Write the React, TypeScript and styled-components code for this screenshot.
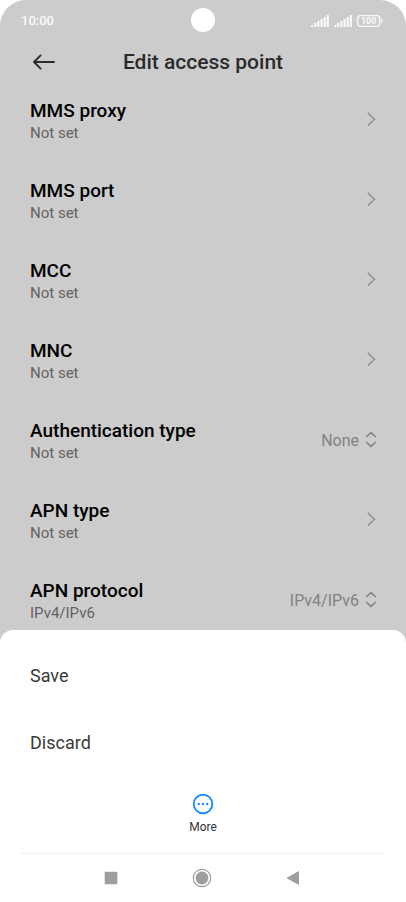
import React, { useState } from "react";
import styled, { createGlobalStyle } from "styled-components";

const GlobalStyle = createGlobalStyle`
  *, *::before, *::after { box-sizing: border-box; }
  html { height: 100%; }
  body {
    margin: 0;
    background: #fff;
    font-family: Roboto, "Noto Sans", sans-serif;
    overflow: hidden;
  }
  button, select { font: inherit; color: inherit; background: none; border: 0; padding: 0; margin: 0; }
  button { cursor: pointer; }
  svg { display: block; flex: none; }
`;

const Screen = styled.div`
  height: 100vh;
  overflow: hidden;
  background: #ccc;
  border-radius: 26px 26px 0 0;
`;

const StatusBar = styled.div`
  height: 40px;
  padding: 0 21px;
  display: grid;
  grid-template-columns: 1fr auto 1fr;
  align-items: center;
  color: #fafafa;
`;

const Clock = styled.time`
  font-size: 13px;
  line-height: 20px;
  padding-top: 2px;
  font-weight: 500;
`;

const Camera = styled.div`
  width: 24px;
  height: 24px;
  border-radius: 50%;
  background: #fff;
`;

const StatusIcons = styled.div`
  display: flex;
  justify-content: flex-end;
  align-items: center;
  gap: 5px;
  padding: 2px 2px 0 0;
`;

const Header = styled.header`
  height: 40px;
  padding: 4px 32px 0;
  display: grid;
  grid-template-columns: 24px 1fr 24px;
  align-items: center;
`;

const Title = styled.h1`
  margin: 0;
  text-align: center;
  font-size: 21px;
  line-height: 28px;
  font-weight: 500;
  color: #2b2b2b;
`;

const List = styled.main`
  display: flex;
  flex-direction: column;
`;

const rowLayout = `
  display: flex;
  align-items: center;
  justify-content: space-between;
  width: 100%;
  height: 80px;
  text-align: left;
`;

const LinkRow = styled.button`
  ${rowLayout}
  &&& { padding: 0 29px 0 30px; }
`;

const ChoiceRow = styled.div`
  ${rowLayout}
  padding: 0 29px 0 30px;
`;

const Texts = styled.span`
  display: flex;
  flex-direction: column;
  padding-top: 2px;
`;

const Name = styled.label`
  font-size: 19px;
  line-height: 24px;
  font-weight: 500;
  color: #000;
  cursor: inherit;
`;

const Detail = styled.span`
  font-size: 15px;
  line-height: 20px;
  color: #626262;
`;

const Choice = styled.span`
  display: flex;
  align-items: center;
  gap: 6px;
  color: #828282;
`;

const Select = styled.select`
  appearance: none;
  field-sizing: content;
  text-align-last: right;
  && {
    font-size: 16px;
    line-height: 24px;
    padding-top: 2px;
  }
`;

const Sheet = styled.section`
  position: fixed;
  left: 0;
  right: 0;
  bottom: 0;
  padding-top: 12px;
  background: #fff;
  border-radius: 13px 13px 0 0;
  display: flex;
  flex-direction: column;
`;

const SheetAction = styled.button`
  && {
    height: 67px;
    padding: 0 30px;
    text-align: left;
    font-size: 18px;
    line-height: 24px;
    color: #3a3a3a;
  }
`;

const MoreButton = styled.button`
  && {
    align-self: center;
    display: flex;
    flex-direction: column;
    align-items: center;
    gap: 4px;
    margin-top: 17px;
    font-size: 12px;
    line-height: 16px;
    color: #333;
  }
`;

const NavBar = styled.nav`
  margin: 18px 22px 0 20px;
  height: 49px;
  border-top: 1px solid #f0f0f0;
  display: flex;
  align-items: center;
  justify-content: center;
  gap: 67px;
`;

const NavButton = styled.button`
  width: 24px;
  height: 24px;
  display: grid;
  place-items: center;
  color: #9e9e9e;
`;

const Signal = () => (
  <svg width="18" height="12" viewBox="0 0 18 12" fill="currentColor" aria-hidden="true">
    {[2, 4, 6, 8, 10, 12].map((h, i) => (
      <rect key={h} x={i * 3.15} y={12 - h} width="2.1" height={h} rx="0.5" />
    ))}
  </svg>
);

const Battery = () => (
  <svg width="26" height="12" viewBox="0 0 26 12" role="img" aria-label="Battery 100">
    <rect x="0.7" y="0.7" width="22" height="10.6" rx="2.6" fill="none" stroke="currentColor" strokeWidth="1.3" />
    <path d="M24 3.8c1.8.3 1.8 4.1 0 4.4z" fill="currentColor" />
    <text x="11.7" y="9.2" textAnchor="middle" fontSize="9" fontWeight="700" fill="currentColor">
      100
    </text>
  </svg>
);

const BackArrow = () => (
  <svg width="24" height="20" viewBox="0 0 24 20" fill="none" stroke="#2b2b2b" strokeWidth="1.9" strokeLinecap="round" strokeLinejoin="round" aria-hidden="true">
    <path d="M22 10H2M8.6 3.4 2 10l6.6 6.6" />
  </svg>
);

const Chevron = () => (
  <svg width="12" height="16" viewBox="0 0 12 16" fill="none" stroke="#8c8c8c" strokeWidth="1.3" aria-hidden="true">
    <path d="M2.8 0.8 9.4 7.3 2.8 13.8" />
  </svg>
);

const UpDown = () => (
  <svg width="12" height="18" viewBox="0 0 12 18" fill="none" stroke="#808080" strokeWidth="1.5" aria-hidden="true">
    <path d="M1.2 6 6 1.6 10.8 6M1.2 11 6 15.4l4.8-4.4" />
  </svg>
);

type Entry = { id: string; name: string; detail: string; options?: string[] };

const entries: Entry[] = [
  { id: "mms-proxy", name: "MMS proxy", detail: "Not set" },
  { id: "mms-port", name: "MMS port", detail: "Not set" },
  { id: "mcc", name: "MCC", detail: "Not set" },
  { id: "mnc", name: "MNC", detail: "Not set" },
  { id: "auth", name: "Authentication type", detail: "Not set", options: ["None", "PAP", "CHAP"] },
  { id: "apn-type", name: "APN type", detail: "Not set" },
  { id: "protocol", name: "APN protocol", detail: "IPv4/IPv6", options: ["IPv4/IPv6", "IPv4", "IPv6"] },
];

const ChoiceEntry = ({ id, name, detail, options = [] }: Entry) => {
  const [value, setValue] = useState(options[0]);
  return (
    <ChoiceRow>
      <Texts>
        <Name htmlFor={id}>{name}</Name>
        <Detail>{detail}</Detail>
      </Texts>
      <Choice>
        <Select id={id} value={value} onChange={(e) => setValue(e.target.value)}>
          {options.map((o) => (
            <option key={o}>{o}</option>
          ))}
        </Select>
        <UpDown />
      </Choice>
    </ChoiceRow>
  );
};

const LinkEntry = ({ name, detail }: Entry) => (
  <LinkRow type="button">
    <Texts>
      <Name as="span">{name}</Name>
      <Detail>{detail}</Detail>
    </Texts>
    <Chevron />
  </LinkRow>
);

export default function App() {
  return (
    <>
      <GlobalStyle />
      <Screen>
        <StatusBar>
          <Clock>10:00</Clock>
          <Camera />
          <StatusIcons>
            <Signal />
            <Signal />
            <Battery />
          </StatusIcons>
        </StatusBar>
        <Header>
          <button type="button" aria-label="Back">
            <BackArrow />
          </button>
          <Title>Edit access point</Title>
        </Header>
        <List>
          {entries.map((e) => (e.options ? <ChoiceEntry key={e.id} {...e} /> : <LinkEntry key={e.id} {...e} />))}
        </List>
      </Screen>
      <Sheet>
        <SheetAction type="button">Save</SheetAction>
        <SheetAction type="button">Discard</SheetAction>
        <MoreButton type="button">
          <svg width="22" height="22" viewBox="0 0 22 22" aria-hidden="true">
            <circle cx="11" cy="11" r="9.3" fill="none" stroke="#1f8bff" strokeWidth="1.9" />
            <g fill="#1f8bff">
              <circle cx="6.8" cy="11" r="1.2" />
              <circle cx="11" cy="11" r="1.2" />
              <circle cx="15.2" cy="11" r="1.2" />
            </g>
          </svg>
          More
        </MoreButton>
        <NavBar>
          <NavButton type="button" aria-label="Recent apps">
            <svg width="14" height="14" viewBox="0 0 14 14" fill="currentColor">
              <rect x="0.7" y="0.7" width="12.6" height="12.6" rx="0.5" />
            </svg>
          </NavButton>
          <NavButton type="button" aria-label="Home">
            <svg width="20" height="20" viewBox="0 0 20 20">
              <circle cx="10" cy="10" r="8.7" fill="none" stroke="currentColor" strokeWidth="1.2" />
              <circle cx="10" cy="10" r="6.4" fill="currentColor" />
            </svg>
          </NavButton>
          <NavButton type="button" aria-label="Back">
            <svg width="14" height="16" viewBox="0 0 14 16" fill="currentColor">
              <path d="M13 1.6v12.8q0 .6-.6.3L1.2 8.4q-.6-.4 0-.8L12.4 1.3q.6-.3.6.3z" />
            </svg>
          </NavButton>
        </NavBar>
      </Sheet>
    </>
  );
}
